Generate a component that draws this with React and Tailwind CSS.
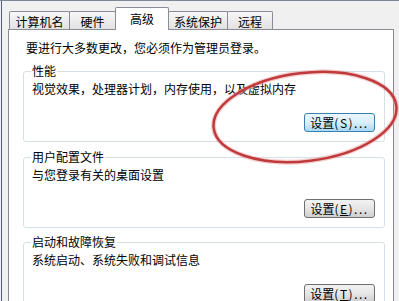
import React from "react";

const font = { fontFamily: '"Noto Sans CJK SC", "Noto Sans", sans-serif' };

function Tab({ label, w, selected }) {
  if (selected) {
    return (
      <div
        className={`relative z-10 -ml-px -mb-px h-[23px] ${w} border border-b-0 border-[#898c95] bg-white flex items-start justify-center pt-[3px] text-[12px] leading-[16px] text-black rounded-t-[2px]`}
      >
        {label}
      </div>
    );
  }
  return (
    <div
      className={`-ml-px h-[18px] ${w} border border-b-0 border-[#898c95] bg-gradient-to-b from-[#f7f7f7] to-[#e2e2e2] flex items-start justify-center pt-[2px] text-[12px] leading-[16px] text-black rounded-t-[2px]`}
    >
      {label}
    </div>
  );
}

function Btn({ children, blue }) {
  return (
    <div
      className={`h-[19px] w-[71px] rounded-[3px] border flex items-center justify-center text-[12px] leading-[16px] text-black ${
        blue
          ? "border-[#3c7fb1] bg-gradient-to-b from-[#eaf6fd] via-[#d9f0fc] to-[#a7d9f5]"
          : "border-[#707070] bg-gradient-to-b from-[#f2f2f2] via-[#e6e6e6] to-[#cfcfcf]"
      }`}
    >
      {children}
    </div>
  );
}

function Group({ title, text, button, className }) {
  return (
    <div
      className={`ml-[14px] mr-[8px] border border-[#d5dfe5] rounded-[3px] ${className}`}
    >
      <div className="-mt-[9px] ml-[7px] w-fit bg-white px-[1px] leading-[16px] text-[12px]">
        {title}
      </div>
      <div className="ml-[8px] mt-[2px] leading-[16px] text-[12px]">{text}</div>
      <div className="flex justify-end pr-[9px] mt-[16px] pb-[9px]">{button}</div>
    </div>
  );
}

export default function App() {
  return (
    <div
      className="relative w-[399px] h-[301px] overflow-hidden bg-[#f0f0f0] text-black"
      style={font}
    >
      <div className="absolute left-[1px] top-0 bottom-0 w-px bg-[#4f5f78]" />
      <div className="absolute left-0 right-0 top-0 h-px bg-[#7d8797]" />
      <div className="flex items-end pl-[10px] pt-[7px]">
        <Tab label="计算机名" w="w-[61px]" />
        <Tab label="硬件" w="w-[47px]" />
        <Tab label="高级" w="w-[54px]" selected />
        <Tab label="系统保护" w="w-[60px]" />
        <Tab label="远程" w="w-[46px]" />
      </div>
      <div className="ml-[8px] w-[386px] h-[300px] border border-[#898c95] bg-white">
        <div className="pl-[17px] pt-[10px] leading-[16px] text-[12px]">
          要进行大多数更改，您必须作为管理员登录。
        </div>
        <Group
          className="mt-[15px]"
          title="性能"
          text="视觉效果，处理器计划，内存使用，以及虚拟内存"
          button={
            <Btn blue>
              设置<span className="tracking-[1.5px]">(S)...</span>
            </Btn>
          }
        />
        <Group
          className="mt-[15px]"
          title="用户配置文件"
          text="与您登录有关的桌面设置"
          button={
            <Btn>
              设置
              <span className="tracking-[1.5px]">
                (<span className="underline">E</span>)...
              </span>
            </Btn>
          }
        />
        <Group
          className="mt-[14px]"
          title="启动和故障恢复"
          text="系统启动、系统失败和调试信息"
          button={
            <Btn>
              设置
              <span className="tracking-[1.5px]">
                (<span className="underline">T</span>)...
              </span>
            </Btn>
          }
        />
      </div>
      <svg
        className="absolute inset-0 pointer-events-none"
        width="399"
        height="301"
        viewBox="0 0 399 301"
      >
        <ellipse
          cx="305"
          cy="117"
          rx="92"
          ry="44"
          transform="rotate(-7 305 117)"
          fill="none"
          stroke="#e8a0a0"
          strokeWidth="5"
          opacity="0.5"
        />
        <ellipse
          cx="305"
          cy="117"
          rx="92"
          ry="44"
          transform="rotate(-7 305 117)"
          fill="none"
          stroke="#c0393b"
          strokeWidth="2.5"
        />
      </svg>
    </div>
  );
}
